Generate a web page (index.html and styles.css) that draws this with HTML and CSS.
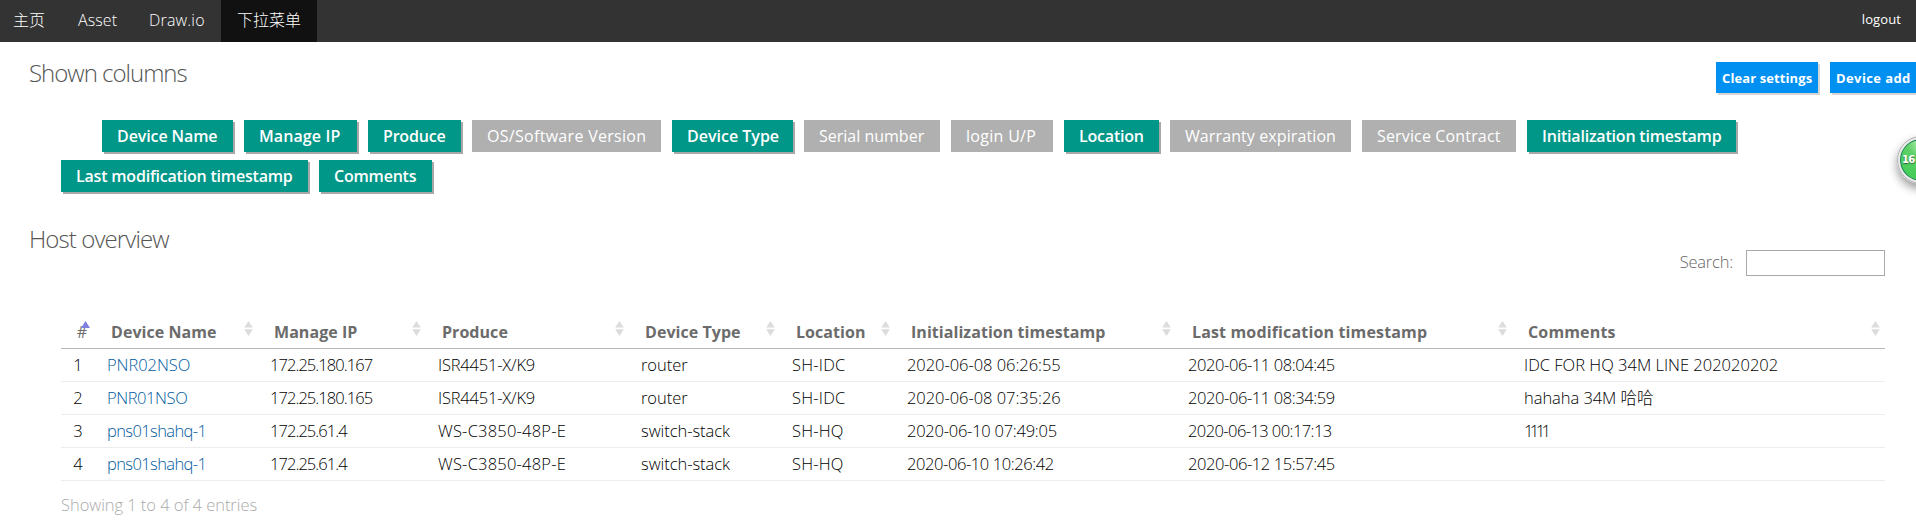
FILE: index.html
```html
<!DOCTYPE html>
<html lang="zh">
<head>
<meta charset="utf-8">
<title>Host overview</title>
<link rel="stylesheet" href="styles.css">
</head>
<body>
<nav class="nav">
  <a class="nav-item nav-home">主页</a><a class="nav-item nav-asset">Asset</a><a class="nav-item nav-draw">Draw.io</a><a class="nav-item active">下拉菜单</a>
  <a class="logout">logout</a>
</nav>
<header class="head-row">
  <h2 class="title">Shown columns</h2>
  <div class="actions"><button class="action">Clear settings</button><button class="action add">Device add</button></div>
</header>
<section class="tags">
  <span class="tag on w131 t1 first">Device Name</span>
  <span class="tag on w113 p1">Manage IP</span>
  <span class="tag on w93 t2">Produce</span>
  <span class="tag w189 p3">OS/Software Version</span>
  <span class="tag on w121">Device Type</span>
  <span class="tag w136">Serial number</span>
  <span class="tag w102 p3">login U/P</span>
  <span class="tag on w95 t2">Location</span>
  <span class="tag w181 p1">Warranty expiration</span>
  <span class="tag w154 p2">Service Contract</span>
  <span class="tag on w209 t2">Initialization timestamp</span>
  <span class="tag on w247 t2">Last modification timestamp</span>
  <span class="tag on w113 t2">Comments</span>
</section>
<h2 class="title host">Host overview</h2>
<div class="search"><label for="q">Search:</label><input id="q" type="text"></div>
<table class="hosts">
  <colgroup><col class="c0"><col class="c1"><col class="c2"><col class="c3"><col class="c4"><col class="c5"><col class="c6"><col class="c7"><col class="c8"></colgroup>
  <thead><tr>
    <th class="num asc">#<svg class="sort" width="9" height="7" viewBox="0 0 9 7"><path d="M4.5 0 9 7H0z" fill="#7f7fdd"/></svg></th>
    <th>Device Name<svg class="sort" width="9" height="15" viewBox="0 0 9 15"><path d="M4.5 0 8.8 6.6H.2zM4.5 15 8.8 8.2H.2z" fill="#dcdcdc"/></svg></th>
    <th>Manage IP<svg class="sort" width="9" height="15" viewBox="0 0 9 15"><path d="M4.5 0 8.8 6.6H.2zM4.5 15 8.8 8.2H.2z" fill="#dcdcdc"/></svg></th>
    <th>Produce<svg class="sort" width="9" height="15" viewBox="0 0 9 15"><path d="M4.5 0 8.8 6.6H.2zM4.5 15 8.8 8.2H.2z" fill="#dcdcdc"/></svg></th>
    <th>Device Type<svg class="sort" width="9" height="15" viewBox="0 0 9 15"><path d="M4.5 0 8.8 6.6H.2zM4.5 15 8.8 8.2H.2z" fill="#dcdcdc"/></svg></th>
    <th>Location<svg class="sort" width="9" height="15" viewBox="0 0 9 15"><path d="M4.5 0 8.8 6.6H.2zM4.5 15 8.8 8.2H.2z" fill="#dcdcdc"/></svg></th>
    <th>Initialization timestamp<svg class="sort" width="9" height="15" viewBox="0 0 9 15"><path d="M4.5 0 8.8 6.6H.2zM4.5 15 8.8 8.2H.2z" fill="#dcdcdc"/></svg></th>
    <th class="wide">Last modification timestamp<svg class="sort" width="9" height="15" viewBox="0 0 9 15"><path d="M4.5 0 8.8 6.6H.2zM4.5 15 8.8 8.2H.2z" fill="#dcdcdc"/></svg></th>
    <th class="wide">Comments<svg class="sort" width="9" height="15" viewBox="0 0 9 15"><path d="M4.5 0 8.8 6.6H.2zM4.5 15 8.8 8.2H.2z" fill="#dcdcdc"/></svg></th>
  </tr></thead>
  <tbody>
    <tr><td class="num">1</td><td><a>PNR02NSO</a></td><td class="ip">172.25.180.167</td><td class="model">ISR4451-X/K9</td><td>router</td><td class="loc">SH-IDC</td><td>2020-06-08 06:26:55</td><td class="d4">2020-06-11 08:04:45</td><td class="memo">IDC FOR HQ 34M LINE 202020202</td></tr>
    <tr><td class="num">2</td><td class="d4"><a>PNR01NSO</a></td><td class="ip">172.25.180.165</td><td class="model">ISR4451-X/K9</td><td>router</td><td class="loc">SH-IDC</td><td>2020-06-08 07:35:26</td><td class="d4">2020-06-11 08:34:59</td><td>hahaha 34M 哈哈</td></tr>
    <tr><td class="num">3</td><td class="lower"><a>pns01shahq-1</a></td><td class="ip">172.25.61.4</td><td class="ws">WS-C3850-48P-E</td><td>switch-stack</td><td class="loc">SH-HQ</td><td class="d2">2020-06-10 07:49:05</td><td class="d5">2020-06-13 00:17:13</td><td class="ones">1111</td></tr>
    <tr><td class="num">4</td><td class="lower"><a>pns01shahq-1</a></td><td class="ip">172.25.61.4</td><td class="ws">WS-C3850-48P-E</td><td>switch-stack</td><td class="loc">SH-HQ</td><td class="d4">2020-06-10 10:26:42</td><td class="d4">2020-06-12 15:57:45</td><td></td></tr>
  </tbody>
</table>
<div class="info">Showing 1 to 4 of 4 entries</div>
<div class="badge">16</div>
</body>
</html>
```
FILE: styles.css
```css
* { box-sizing: border-box; }
html, body { overflow: hidden; }
body {
  margin: 0;
  width: 1916px;
  height: 529px;
  background: #fff;
  font-family: "Open Sans", "Noto Sans CJK SC", sans-serif;
  font-size: 16px;
  color: #000;
}
.nav { display: flex; height: 42px; background: #333; color: #fff; line-height: 40px; padding-right: 15px; }
.nav-item { padding: 0 16px; font-weight: 300; white-space: nowrap; }
.nav-home { width: 61px; padding-left: 13px; }
.nav-asset { width: 72px; padding-left: 17px; letter-spacing: .1px; }
.nav-draw { width: 88px; letter-spacing: .2px; }
.active { width: 96px; background: #111; }
.logout { margin-left: auto; font-size: 13px; line-height: 39px; letter-spacing: .1px; }

.head-row { display: flex; justify-content: space-between; height: 78px; padding-left: 29px; }
.title { margin: 0; font-size: 24px; line-height: 34px; font-weight: 300; color: #555; letter-spacing: -1px; }
.head-row .title { padding-top: 14px; }
.actions { display: flex; gap: 12px; padding-top: 20px; width: 200px; }
.action {
  flex: none; width: 102px; height: 31px; padding: 0 0 0 6px; border: 0; background: #0090f2; color: #fff; text-align: left;
  font: 700 13px "Open Sans", sans-serif; letter-spacing: .1px; box-shadow: 2px 2px 0 #d5d5d5; white-space: nowrap;
}
.add { letter-spacing: .4px; }

.tags { display: flex; flex-wrap: wrap; gap: 8px 11px; padding: 0 160px 0 61px; height: 72px; align-content: flex-start; }
.tag { height: 32px; line-height: 32px; padding-left: 15px; background: #b0b0b0; color: #fff; white-space: nowrap; }
.on { background: #009688; font-weight: 600; box-shadow: 2px 2px 0 #a8a8a8; }
.first { margin-left: 41px; }
.w131 { width: 131px; } .w113 { width: 113px; } .w93 { width: 93px; } .w189 { width: 189px; }
.w121 { width: 121px; } .w136 { width: 136px; } .w102 { width: 102px; } .w95 { width: 95px; }
.w181 { width: 181px; } .w154 { width: 154px; } .w209 { width: 209px; } .w247 { width: 247px; }
.t1 { letter-spacing: -.1px; } .t2 { letter-spacing: -.2px; }
.p1 { letter-spacing: .1px; } .p2 { letter-spacing: .15px; } .p3 { letter-spacing: .3px; }

.host { margin: 30px 0 0 29px; height: 28px; letter-spacing: -.9px; }
.search { display: flex; justify-content: flex-end; gap: 13px; padding-right: 31px; line-height: 24px; font-size: 16.5px; font-weight: 300; color: #666; letter-spacing: -.2px; }
.search input { width: 139px; height: 26px; border: 1px solid #a9a9a9; background: #fff; }

.hosts { margin: 38px 0 0 61px; width: 1824px; table-layout: fixed; border-collapse: separate; border-spacing: 0; }
.c0 { width: 34px; } .c1 { width: 163px; } .c2 { width: 168px; } .c3 { width: 203px; } .c4 { width: 151px; }
.c5 { width: 115px; } .c6 { width: 281px; } .c7 { width: 336px; } .c8 { width: 373px; }
th {
  position: relative; height: 35px; padding: 2px 0 0 16px; border-bottom: 1px solid #b9b9b9;
  text-align: left; font-weight: 700; color: #6b6b6b; line-height: 24px; letter-spacing: .05px; white-space: nowrap;
}
.wide { letter-spacing: .15px; }
.sort { position: absolute; right: 5.5px; top: 7px; }
td {
  height: 33px; padding: 0 0 0 12px; border-bottom: 1px solid #ededed; line-height: 24px;
  font-size: 16.5px; font-weight: 300; letter-spacing: -.05px; white-space: nowrap;
}
td a { color: #005b9e; }
td.num { padding: 0; text-align: center; }
th.num { padding-left: 8px; text-align: center; font-weight: 400; }
.ip { letter-spacing: -.95px; }
.lower { letter-spacing: -.6px; }
.model { letter-spacing: -.2px; }
.ws, .loc { letter-spacing: .2px; }
.memo { letter-spacing: 0; }
.d2 { letter-spacing: -.25px; } .d4 { letter-spacing: -.42px; } .d5 { letter-spacing: -.58px; }
.ones { letter-spacing: -3.6px; }
.info { margin: 12px 0 0 61px; line-height: 24px; font-size: 16.5px; font-weight: 300; color: #aaa; letter-spacing: -.05px; }

.badge {
  position: absolute; left: 1897px; top: 136px; width: 48px; height: 48px; border-radius: 50%;
  border: 3px solid #e8e8e8; outline: 1px solid #b5b5b5; outline-offset: -1px;
  background: radial-gradient(circle at 50% 8%, #b5efb5 0, #5fd068 32%, #48cc5a 70%);
  box-shadow: inset 0 0 0 1px #15795a, 0 5px 10px rgba(0, 0, 0, .4);
  padding-left: 2px; color: #fff; font: 700 10px/42px "DejaVu Sans", sans-serif; letter-spacing: -.8px; text-shadow: 0 1px 1px #33663c;
}
```
